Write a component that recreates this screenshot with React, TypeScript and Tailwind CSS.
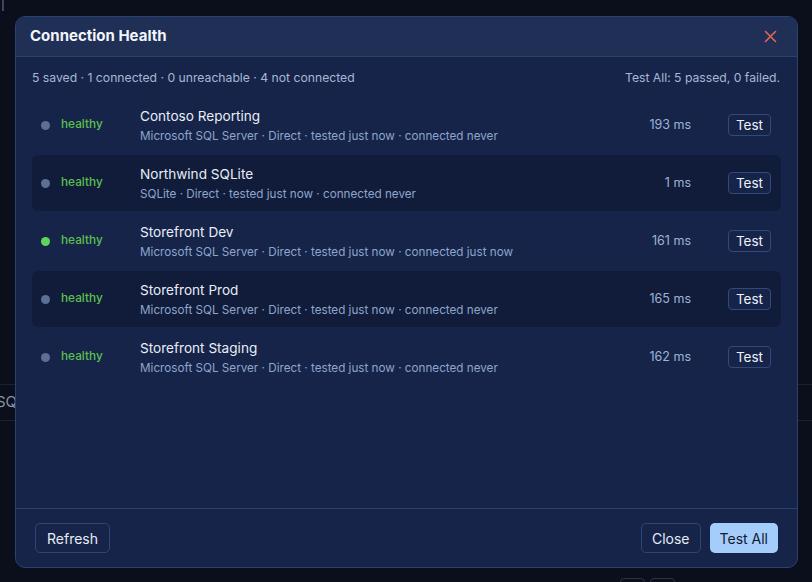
import React from "react";

type Row = {
  name: string;
  sub: string;
  ms: string;
  active?: boolean;
};

const rows: Row[] = [
  { name: "Contoso Reporting", sub: "Microsoft SQL Server · Direct · tested just now · connected never", ms: "193 ms" },
  { name: "Northwind SQLite", sub: "SQLite · Direct · tested just now · connected never", ms: "1 ms" },
  { name: "Storefront Dev", sub: "Microsoft SQL Server · Direct · tested just now · connected just now", ms: "161 ms", active: true },
  { name: "Storefront Prod", sub: "Microsoft SQL Server · Direct · tested just now · connected never", ms: "165 ms" },
  { name: "Storefront Staging", sub: "Microsoft SQL Server · Direct · tested just now · connected never", ms: "162 ms" },
];

export default function App() {
  return (
    <div
      className="relative w-[812px] h-[582px] overflow-hidden bg-[#0a0f1b]"
      style={{ fontFamily: "Inter, 'Noto Sans', 'Liberation Sans', sans-serif" }}
    >
      {/* underlying app (hidden behind modal) */}
      <div className="flex flex-col h-full">
        <div className="h-[11px] w-[2px] ml-[2px] bg-[#3a4660]" />
        <div className="h-[373px]" />
        <div className="h-[37px] border-y border-[#1a2232] flex items-center">
          <span className="text-[15px] text-[#8b93a3] -ml-[4px]">SQ</span>
        </div>
        <div className="flex-1" />
        <div className="flex gap-[5px] pl-[620px] h-[4px]">
          <div className="w-[25px] h-[10px] rounded-t-[4px] border border-[#2a3346]" />
          <div className="w-[25px] h-[10px] rounded-t-[4px] border border-[#2a3346]" />
        </div>
      </div>

      {/* modal */}
      <div className="absolute left-[15px] top-[16px] w-[783px] h-[552px] rounded-[10px] border border-[#2c4170] bg-[#16244a] flex flex-col overflow-hidden">
        <div className="h-[40px] shrink-0 bg-[#1f2f55] border-b border-[#2c4170] flex items-center justify-between pl-[14px] pr-[20px]">
          <span className="text-[15px] font-bold text-[#f2f5fa]">Connection Health</span>
          <svg width="13" height="13" viewBox="0 0 13 13" fill="none" stroke="#e0675a" strokeWidth="1.6" strokeLinecap="round">
            <path d="M1.5 1.5 L11.5 11.5 M11.5 1.5 L1.5 11.5" />
          </svg>
        </div>

        <div className="flex-1 flex flex-col px-[16px]">
          <div className="flex justify-between items-center h-[20px] mt-[11px] mb-[9px] text-[12.2px] text-[#a6b8d5]">
            <span>5 saved · 1 connected · 0 unreachable · 4 not connected</span>
            <span className="pr-[1px]">Test All: 5 passed, 0 failed.</span>
          </div>
          <div className="flex flex-col gap-[2px]">
            {rows.map((r, i) => (
              <div
                key={r.name}
                className={`h-[56px] rounded-[6px] flex items-center pl-[9px] pr-[10px] ${i % 2 === 1 ? "bg-[#111c3b]" : ""}`}
              >
                <div className="w-[99px] flex items-center gap-[11px]">
                  <span className={`w-[9px] h-[9px] rounded-full ${r.active ? "bg-[#5fd35b]" : "bg-[#5d6f93]"}`} />
                  <span className="text-[11.8px] font-medium text-[#5cc04c]">healthy</span>
                </div>
                <div className="flex-1 flex flex-col gap-[3px] pt-[1px]">
                  <span className="text-[13.6px] text-[#e8edf6] leading-[18px]">{r.name}</span>
                  <span className="text-[11.7px] text-[#8ea5ca] leading-[16px]">{r.sub}</span>
                </div>
                <span className="text-[12.5px] text-[#9fb3d4] mr-[37px]">{r.ms}</span>
                <button className="h-[22px] w-[43px] rounded-[4px] border border-[#33497a] bg-[#16244a] text-[13.5px] text-[#eef2f8] flex items-center justify-center">
                  Test
                </button>
              </div>
            ))}
          </div>
        </div>

        <div className="h-[59px] shrink-0 border-t border-[#2c4170] flex items-center justify-between px-[19px]">
          <button className="h-[30px] px-[11px] rounded-[5px] border border-[#2f4675] text-[14px] text-[#e6ecf5]">
            Refresh
          </button>
          <div className="flex gap-[9px]">
            <button className="h-[30px] px-[10px] rounded-[5px] border border-[#2f4675] text-[14px] text-[#e6ecf5]">
              Close
            </button>
            <button className="h-[30px] px-[10px] rounded-[5px] bg-[#a4cdfb] text-[14px] text-[#0f1a30]">
              Test All
            </button>
          </div>
        </div>
      </div>
    </div>
  );
}
